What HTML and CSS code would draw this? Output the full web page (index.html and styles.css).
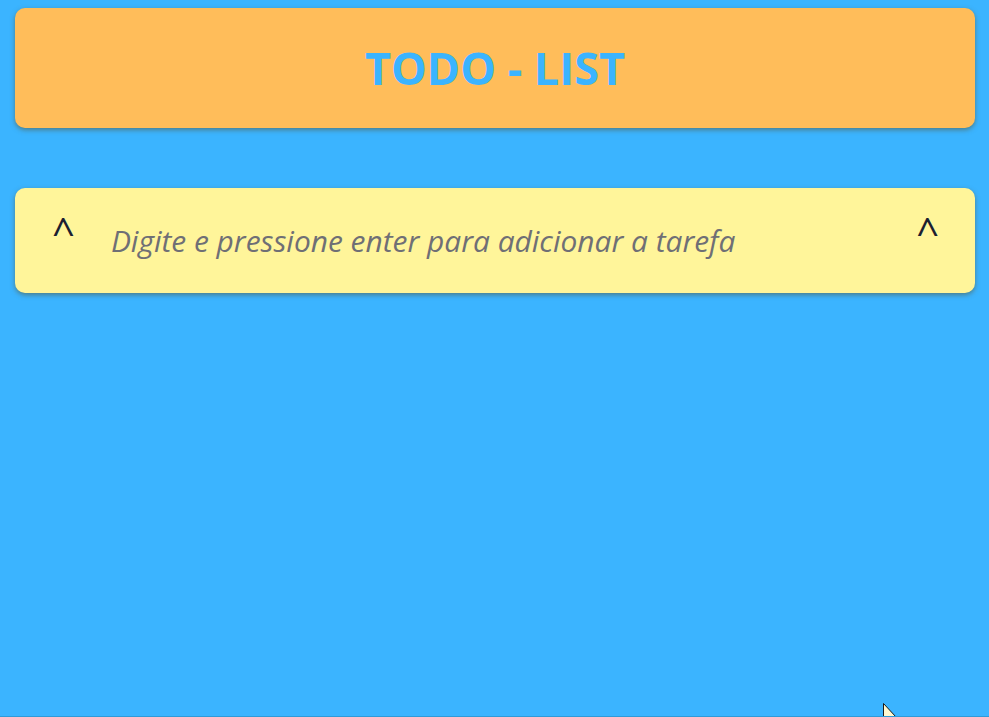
FILE: index.html
```html
<!DOCTYPE html>
<html lang="pt">
<head>
<meta charset="utf-8">
<title>Todo List</title>
<link rel="stylesheet" href="styles.css">
</head>
<body>
<div class="page">
  <header class="header">
    <h1 class="title">TODO - LIST</h1>
  </header>
  <form class="new-task">
    <span class="caret">^</span>
    <input class="task-input" type="text" placeholder="Digite e pressione enter para adicionar a tarefa">
    <span class="caret">^</span>
  </form>
</div>
<svg class="cursor" width="14" height="14" viewBox="0 0 14 14"><path d="M0.5 0.5 L0.5 14 L13 14 Z" fill="#fff8d0" stroke="#1a1a1a" stroke-width="1"/></svg>
</body>
</html>
```
FILE: styles.css
```css
html, body {
  margin: 0;
  height: 100%;
}
body {
  background: #3bb4ff;
  font-family: "Open Sans", "DejaVu Sans", sans-serif;
  border-bottom: 1px solid #2f9ad8;
  box-sizing: border-box;
  overflow: hidden;
  position: relative;
}
.page {
  padding: 8px 14px 0 15px;
  display: flex;
  flex-direction: column;
  gap: 60px;
}
.header {
  height: 120px;
  background: #ffbd5a;
  border-radius: 10px;
  box-shadow: 0 2px 5px rgba(90, 80, 40, 0.55);
  display: flex;
  align-items: center;
  justify-content: center;
}
.title {
  margin: 0;
  color: #3bb4ff;
  font-size: 45px;
  font-weight: 700;
  line-height: 1;
  position: relative;
  top: -1px;
}
.new-task {
  margin: 0;
  height: 105px;
  background: #fff59a;
  border-radius: 10px;
  box-shadow: 0 2px 5px rgba(90, 80, 40, 0.55);
  display: flex;
  align-items: flex-start;
  padding: 0 36px 0 37px;
  box-sizing: border-box;
}
.caret {
  font-size: 40px;
  color: #1b2030;
  line-height: 1;
  padding-top: 24px;
}
.task-input {
  flex: 1;
  margin: 32px 0 0 36px;
  border: none;
  outline: none;
  background: transparent;
  font-family: "Open Sans", "DejaVu Sans", sans-serif;
  font-style: italic;
  font-size: 29.9px;
  color: #555;
  padding: 0;
}
.task-input::placeholder {
  color: #6f6f75;
  opacity: 1;
}
.cursor {
  position: absolute;
  left: 883px;
  top: 703px;
}
```
